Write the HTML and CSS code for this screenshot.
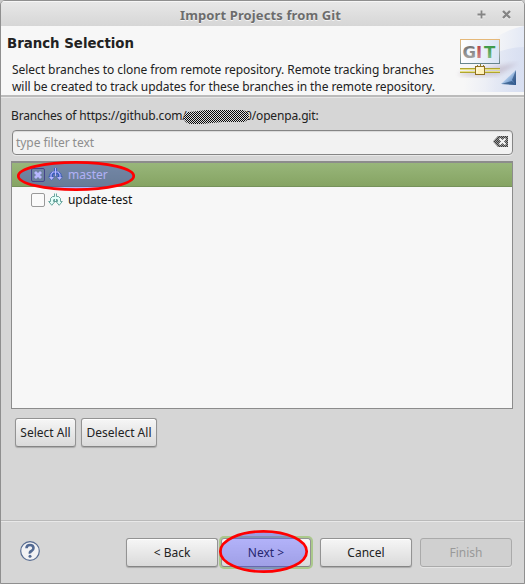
FILE: index.html
```
<!DOCTYPE html>
<html lang="en">
<head>
<meta charset="utf-8">
<title>Import Projects from Git</title>
<link rel="stylesheet" href="styles.css">
</head>
<body>
<div class="window">
  <header class="titlebar">
    <h1 class="window-title">Import Projects from Git</h1>
    <div class="controls">
      <svg width="9" height="9" viewBox="0 0 9 9"><path d="M4.500 .5v8M.5 4.500h8" stroke="#858585" stroke-width="1.800"/></svg>
      <svg width="9" height="9" viewBox="0 0 9 9"><path d="M1 1l7 7M8 1l-7 7" stroke="#858585" stroke-width="2.400"/></svg>
    </div>
  </header>
  <section class="banner">
    <div class="banner-text">
      <h2 class="heading">Branch Selection</h2>
      <p class="desc">Select branches to clone from remote repository. Remote tracking branches<br><span class="desc-second">will be created to track updates for these branches in the remote repository.</span></p>
    </div>
    <svg class="banner-art" width="75" height="66" viewBox="449 26 75 66">
      <defs>
        <linearGradient id="fade" gradientUnits="userSpaceOnUse" x1="488" x2="524" y1="60" y2="64"><stop offset="0" stop-color="#e4e9f6" stop-opacity="0"/><stop offset="1" stop-color="#e1e7f5"/></linearGradient>
        <linearGradient id="fade2" gradientUnits="userSpaceOnUse" x1="465" x2="524" y1="70" y2="76"><stop offset="0" stop-color="#dce2f3" stop-opacity="0"/><stop offset="1" stop-color="#d8dff1"/></linearGradient>
        <linearGradient id="panel" x1="0" x2="1"><stop offset="0" stop-color="#fff"/><stop offset="1" stop-color="#d9e5f4"/></linearGradient>
        <linearGradient id="frame" x1="0" x2="0" y1="0" y2="1"><stop offset="0" stop-color="#e5b878"/><stop offset=".5" stop-color="#a9afa8"/><stop offset="1" stop-color="#67858d"/></linearGradient>
        <linearGradient id="g" x1="0" x2="0" y1="0" y2="1"><stop offset=".2" stop-color="#777"/><stop offset="1" stop-color="#b0b0b0"/></linearGradient>
        <linearGradient id="i" x1="0" x2="0" y1="0" y2="1"><stop offset=".2" stop-color="#b84a50"/><stop offset="1" stop-color="#d89a9d"/></linearGradient>
        <linearGradient id="t" x1="0" x2="0" y1="0" y2="1"><stop offset=".2" stop-color="#3f9a49"/><stop offset="1" stop-color="#8ec596"/></linearGradient>
        <linearGradient id="tri" gradientUnits="userSpaceOnUse" x1="503" x2="517" y1="72" y2="86"><stop offset=".3" stop-color="#b9d2ee"/><stop offset=".65" stop-color="#6f98cc"/><stop offset="1" stop-color="#3564a4"/></linearGradient>
        <filter id="soft"><feGaussianBlur stdDeviation="2"/></filter>
      </defs>
      <path d="M455 92Q480 34 524 26v66z" fill="url(#fade)"/>
      <path d="M449 92Q485 47 524 47v45z" fill="url(#fade2)"/>
      <path d="M459 73l20-4 39-6-19 12q-23 3-40 0z" fill="#9b8499" opacity=".32" filter="url(#soft)"/>
      <rect x="460.500" y="39.500" width="39" height="24" fill="url(#panel)" stroke="url(#frame)"/>
      <path d="M460 63.500h40" stroke="#67858d"/>
      <g class="git-letters"><text x="462.500" y="58" fill="url(#g)">G</text><text x="476" y="58" fill="url(#i)">I</text><text x="484" y="58" fill="url(#t)">T</text></g>
      <path d="M460 68.500h40M460 72.500h40" stroke="#b0a62f"/>
      <path d="M460 69.500h40M460 71.500h40" stroke="#e6df86"/>
      <path d="M477.500 65v2M480.500 64v2M483.500 65v2" stroke="#8e802f"/>
      <rect x="475.500" y="66.500" width="9" height="8" fill="#fff1bb" stroke="#907021"/>
      <path d="M477 73V68h6" stroke="#fffbe6" fill="none"/>
      <path d="M501 84l15-14v15z" fill="url(#tri)"/>
      <path d="M512 80l4-10v15z" fill="#173968" opacity=".55"/><path d="M501 84l11-3 4 4z" fill="#234978" opacity=".65"/>
    </svg>
  </section>
  <main class="content">
    <div class="repo-label"><span class="repo-start">Branches of https://github.com/</span><svg class="mask" width="66" height="17" viewBox="0 0 66 17"><defs><pattern id="chk" width="2" height="2" patternUnits="userSpaceOnUse"><path d="M0 0h1v1H0zM1 1h1v1H1z" fill="#080808"/></pattern></defs><path d="M5 3Q16 2 23 1H60Q66 3 66 7T61 13H40Q28 14 19 15H7Q2 14 1 10T5 3z" fill="#ddd"/><path d="M5 3Q16 2 23 1H60Q66 3 66 7T61 13H40Q28 14 19 15H7Q2 14 1 10T5 3z" fill="url(#chk)"/></svg><span class="repo-end">0/openpa.git:</span></div>
    <div class="filter"><span class="placeholder">type filter text</span>
      <svg width="15" height="12" viewBox="0 0 15 12"><defs><pattern id="dots" width="2" height="2" patternUnits="userSpaceOnUse"><path d="M0 0h2v2H0z" fill="#999"/><path d="M0 0h1v1H0zM1 1h1v1H1z" fill="#3b3b3b"/></pattern></defs><path d="M0 5.500l5-5.500h10v11H5z" fill="url(#dots)"/><path d="M6.500 2.500l6 6M12.500 2.500l-6 6" stroke="#f2f2f2" stroke-width="2.300"/></svg>
    </div>
    <div class="list">
      <div class="row selected"><span class="check"><svg width="8" height="8" viewBox="0 0 8 8"><path d="M1 1l6 6M7 1L1 7" stroke="#fff" stroke-width="2.800"/></svg></span>
        <svg class="branch" width="15" height="15" viewBox="0 0 15 15"><path d="M6 1h3v3.500h2l2.500 2.500v2.500h1.500L11.500 13.500 8 9.500h2V8L8.500 6.500v2.500h-2V6.500L5 8v1.500h2L3.500 13.500 0 9.500h1.500V7L4 4.500h2z" fill="#3c6f9c"/><path d="M7.500 1v8M7.500 5H5L3 7.500V10M7.500 5H10l2 2.500V10" fill="none" stroke="#fff" stroke-width="1.100"/><path d="M1 10h5l-2.500 3zM9 10h5l-2.500 3z" fill="#fff"/></svg><span class="branch-name master">master</span></div>
      <div class="row"><span class="check"></span>
        <svg class="branch" width="15" height="14" viewBox="0 0 15 14"><path d="M6.500 .5v3H4.500L2.500 5.500V8.500H.7L3.800 12.300 7 8.500H5.500V7L6.500 6v2.500h2V6L9.500 7V8.500H8l3.200 3.800L14.300 8.500H12.500V5.500L10.500 3.500H8.500V.5" fill="#e3fff9" stroke="#5b9b93" stroke-width=".9"/></svg><span class="branch-name">update-test</span></div>
    </div>
    <div class="select-buttons"><button class="btn select-all">Select All</button><button class="btn deselect">Deselect All</button></div>
  </main>
  <footer class="footer">
    <svg class="help" width="22" height="22" viewBox="0 0 22 22"><circle cx="11" cy="11" r="9.300" fill="#f2f2f4" stroke="#566b91" stroke-width="1.200"/><path d="M7.500 8.200Q7.500 5 11 5t3.500 3Q14.500 10 12.500 11T11 13.600" fill="none" stroke="#536a93" stroke-width="2.600"/><circle cx="11" cy="16.300" r="1.500" fill="#536a93"/></svg>
    <div class="actions"><button class="btn">&lt; Back</button><button class="btn next">Next &gt;</button><button class="btn">Cancel</button><button class="btn disabled" disabled>Finish</button></div>
  </footer>
</div>
<svg class="marks" width="525" height="584" viewBox="0 0 525 584"><g fill="#3030ff" fill-opacity=".34" stroke="#f00" stroke-width="2.700"><ellipse cx="76" cy="176" rx="57.700" ry="13.700"/><ellipse cx="263.500" cy="551.500" rx="43.200" ry="20.200"/></g></svg>
</body>
</html>
```
FILE: styles.css
```
* { box-sizing: border-box; }
body { margin: 0; width: 525px; height: 584px; overflow: hidden; background: #c9c9c9; font: 12px/17px "Noto Sans", sans-serif; color: #222; }
h1, h2, p { margin: 0; }
svg { display: block; flex: none; }
.window { height: 584px; display: flex; flex-direction: column; background: #d6d6d6; border: 1px solid #8f8f8f; border-radius: 5px 5px 0 0; overflow: hidden; }
.titlebar { height: 25px; flex: none; display: grid; grid-template-columns: 1fr auto; align-items: center; background: linear-gradient(#e8e8e8, #d6d6d6); box-shadow: inset 0 1px #f6f6f6; padding: 0 13px 0 179px; }
.window-title { font-size: 13px; line-height: 25px; font-weight: bold; letter-spacing: .12px; color: #6c6c6c; text-shadow: 0 1px #f4f4f4; white-space: nowrap; padding-top: 3px; margin-top: -1px; }
.controls { display: flex; gap: 16px; margin-top: 0; filter: drop-shadow(0 1px #f2f2f2); }
.banner { height: 71px; flex: none; display: flex; justify-content: space-between; background: #f7f7f7; border-bottom: 2px solid #bbb; box-shadow: 0 1px #e7e7e7; }
.banner-text { width: 448px; padding: 9px 0 0 6px; white-space: nowrap; }
.heading { font: bold 13.33px/17px "DejaVu Sans", sans-serif; }
.desc { margin: 9px 0 0 5px; letter-spacing: -.05px; }
.desc-second { letter-spacing: -.065px; }
.git-letters { font: bold 16.5px "DejaVu Sans", sans-serif; }
.content { height: 423px; flex: none; padding: 10px 11px 0 10px; }
.repo-label { display: flex; align-items: center; height: 17px; white-space: nowrap; }
.repo-start { width: 175px; letter-spacing: -.15px; }
.repo-end { letter-spacing: -.15px; }
.mask { margin: 3px -4px 0 -3px; position: relative; }
.filter { margin-top: 6px; height: 25px; width: 501px; margin-left: 1px; border: 1px solid #858585; border-radius: 4px; background: #f2f2f2; box-shadow: 0 1px #e8e8e8, inset 0 1px 1px #d9d9d9; display: flex; align-items: center; justify-content: space-between; padding: 0 4px 0 3px; color: #8e8e8e; }
.placeholder { letter-spacing: -.05px; }
.filter svg { margin-top: -2px; }
.list { margin-top: 6px; height: 248px; border: 1px solid #8c8c8c; border-top-width: 2px; background: #f7f7f7; }
.row { height: 25px; display: flex; align-items: center; padding-left: 19px; color: #111; }
.row.selected { height: 24px; color: #f3f3f3; background: linear-gradient(#98b67a, #86a463); border-bottom: 1px solid #76925b; }
.branch-name { letter-spacing: -.08px; }
.master { letter-spacing: 0; }
.check { width: 14px; height: 14px; border: 1px solid #999; border-radius: 2px; background: #fafafa; display: grid; place-items: center; }
.selected .check { background: transparent; border-color: #505050; }
.branch { margin: 0 5px 0 3px; }
.select-buttons { display: flex; gap: 5px; padding: 9px 0 0 4px; }
.btn { font: inherit; color: #222; padding: 0; width: 92px; height: 29px; border: 1px solid #939393; border-bottom-color: #858585; border-radius: 3px; background: linear-gradient(#f6f6f6, #dadada); box-shadow: inset 0 1px #fff, 0 1px 1px #aaa; }
.select-all { width: 61px; }
.deselect { width: 76px; }
.footer { flex: 1; display: flex; justify-content: space-between; padding: 17px 12px 0 18px; border-top: 1px solid #bababa; box-shadow: inset 0 1px #e8e8e8; }
.help { margin-top: 2px; }
.actions { display: flex; gap: 8px; }
.actions .next { width: 90px; margin: 0 1px 0 -5px; box-shadow: 0 0 0 2px #abc98c; }
.btn.disabled { color: #999; background: #d0d0d0; border-color: #aaa; box-shadow: 0 1px #e5e5e5; }
.marks { position: absolute; left: 0; top: 0; pointer-events: none; }
```
